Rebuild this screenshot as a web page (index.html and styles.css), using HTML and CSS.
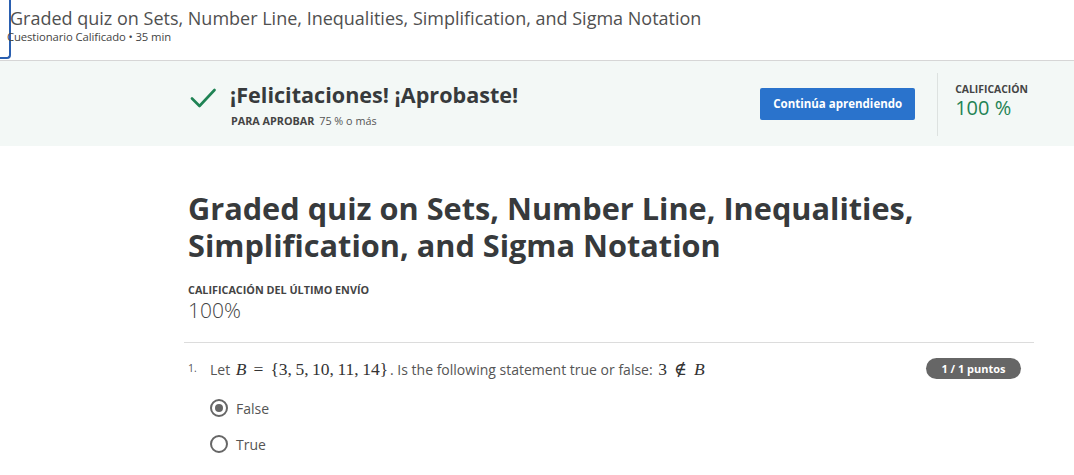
FILE: index.html
```html
<!DOCTYPE html>
<html lang="es">
<head>
<meta charset="utf-8">
<title>Graded quiz</title>
<link rel="stylesheet" href="styles.css">
</head>
<body>
<header class="topbar">
  <div class="focus-edge"></div>
  <div class="topbar-text">
    <div class="topbar-title">Graded quiz on Sets, Number Line, Inequalities, Simplification, and Sigma Notation</div>
    <div class="topbar-sub">Cuestionario Calificado • 35 min</div>
  </div>
</header>

<section class="band">
  <div class="band-inner">
    <svg class="check" width="26" height="20" viewBox="0 0 26 20" aria-hidden="true">
      <path d="M2 10.5 L9.5 18 L24.5 2" fill="none" stroke="#1f8354" stroke-width="2.6" stroke-linecap="round" stroke-linejoin="round"/>
    </svg>
    <div class="band-msg">
      <h2 class="band-title">¡Felicitaciones! ¡Aprobaste!</h2>
      <div class="band-pass"><span class="band-pass-label">PARA APROBAR</span> 75 % o más</div>
    </div>
    <button class="btn-primary">Continúa aprendiendo</button>
    <div class="band-divider"></div>
    <div class="band-grade">
      <div class="band-grade-label">CALIFICACIÓN</div>
      <div class="band-grade-value">100 %</div>
    </div>
  </div>
</section>

<main class="content">
  <h1 class="quiz-title">Graded quiz on Sets, Number Line, Inequalities, Simplification, and Sigma Notation</h1>
  <div class="last-label">CALIFICACIÓN DEL ÚLTIMO ENVÍO</div>
  <div class="last-value">100%</div>
  <hr class="rule">
  <div class="question">
    <span class="q-num">1.</span>
    <div class="q-body">
      <div class="q-text">Let <span class="math"><i>B</i><span class="rel">=</span>{3,&thinsp;5,&thinsp;10,&thinsp;11,&thinsp;14}</span>. Is the following statement true or false: <span class="math">3<span class="rel">∉</span><i>B</i></span></div>
      <div class="option first"><span class="radio checked"></span><span class="opt-label">False</span></div>
      <div class="option"><span class="radio"></span><span class="opt-label">True</span></div>
    </div>
    <span class="badge">1 / 1 puntos</span>
  </div>
</main>
</body>
</html>
```

FILE: styles.css
```css
* { box-sizing: border-box; }
body {
  margin: 0;
  font-family: "Open Sans", "Noto Sans", sans-serif;
  color: #373a3c;
  background: #fff;
}
.topbar {
  display: flex;
  height: 61px;
  border-bottom: 1px solid #d6d6d6;
}
.focus-edge {
  width: 11px;
  height: 59px;
  border-right: 2px solid #2a5fb0;
  border-bottom: 2px solid #2a5fb0;
  border-bottom-right-radius: 4px;
  flex: none;
}
.topbar-text {
  padding-top: 6px;
  margin-left: -1px;
}
.topbar-title {
  font-size: 18px;
  line-height: 24px;
  color: #505050;
}
.topbar-sub {
  font-size: 11.3px;
  line-height: 14px;
  color: #444;
  margin-left: -3px;
  letter-spacing: -0.1px;
}
.band {
  background: #f3f8f6;
  height: 85px;
}
.band-inner {
  margin-left: 190px;
  width: 838px;
  height: 100%;
  display: flex;
  align-items: center;
  padding-top: 2px;
}
.check { flex: none; margin-top: -14px; }
.band-msg { margin-left: 14px; flex: 1; }
.band-title {
  margin: 0;
  font-size: 21.6px;
  font-weight: 700;
  line-height: 26px;
  color: #373a3c;
}
.band-pass {
  font-size: 10.8px;
  color: #555;
  margin-top: 5px;
  margin-left: 1px;
}
.band-pass-label { font-weight: 700; color: #444; margin-right: 2px; }
.btn-primary {
  width: 155px;
  height: 32px;
  border: none;
  border-radius: 2px;
  background: #2a73cc;
  color: #fff;
  font-family: inherit;
  font-weight: 700;
  font-size: 11.5px;
  padding: 0;
  margin-top: -2px;
  flex: none;
}
.band-divider {
  width: 1px;
  height: 63px;
  background: #dde2e0;
  margin-left: 22px;
  margin-right: 17px;
  flex: none;
}
.band-grade { flex: none; margin-top: -8px; }
.band-grade-label {
  font-size: 10.4px;
  font-weight: 700;
  color: #444;
  line-height: 14px;
}
.band-grade-value {
  font-size: 20px;
  line-height: 24px;
  color: #1f8354;
}
.content {
  margin-left: 188px;
  width: 842px;
  padding-top: 44px;
}
.quiz-title {
  margin: 0;
  font-size: 30.7px;
  line-height: 37px;
  font-weight: 700;
  color: #373a3c;
  width: 760px;
}
.last-label {
  margin-top: 19px;
  font-size: 10.8px;
  font-weight: 700;
  color: #444;
  line-height: 14px;
}
.last-value {
  font-size: 21px;
  font-weight: 300;
  line-height: 28px;
  color: #444;
  margin-top: -1px;
}
.rule {
  border: none;
  border-top: 1px solid #dcdcdc;
  margin: 18px -4px 0 -4px;
}
.question {
  display: flex;
  align-items: flex-start;
  padding-top: 15px;
}
.q-num {
  font-size: 10.5px;
  width: 22px;
  flex: none;
  color: #555;
  line-height: 20px;
}
.q-body { flex: 1; }
.q-text {
  font-size: 14px;
  line-height: 22px;
  color: #555;
}
.math {
  font-family: "Liberation Serif", "DejaVu Serif", serif;
  font-size: 17.5px;
  color: #333;
  margin: 0 2px;
}
.math i { font-style: italic; }
.rel { margin: 0 7px; }
.option {
  display: flex;
  align-items: center;
  height: 36px;
}
.option.first { margin-top: 9px; }
.radio {
  width: 18px;
  height: 18px;
  border-radius: 50%;
  border: 2px solid #666;
  flex: none;
  display: flex;
  align-items: center;
  justify-content: center;
}
.radio.checked::after {
  content: "";
  width: 8px;
  height: 8px;
  border-radius: 50%;
  background: #666;
}
.opt-label {
  margin-left: 8px;
  font-size: 14px;
  color: #555;
}
.badge {
  flex: none;
  width: 95px;
  height: 21px;
  border-radius: 11px;
  background: #666;
  color: #fff;
  font-size: 11px;
  font-weight: 700;
  display: flex;
  align-items: center;
  justify-content: center;
  margin-right: 9px;
}
```
